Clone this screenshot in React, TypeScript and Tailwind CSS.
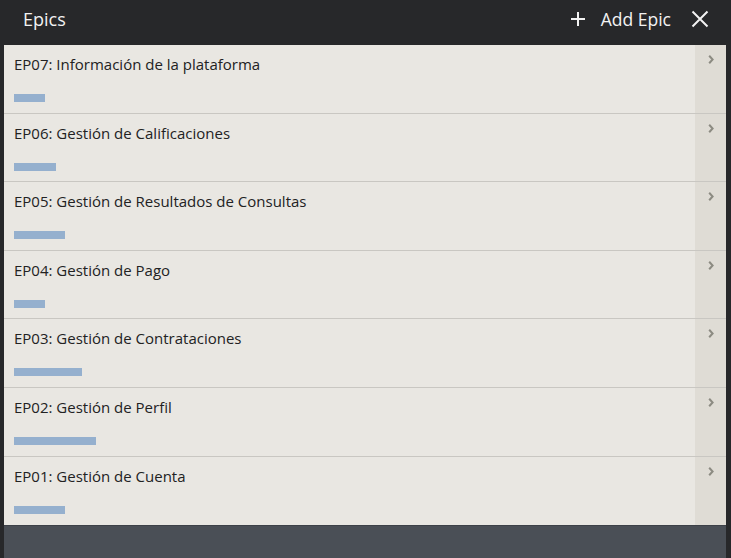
import React from 'react'

const epics = [
    { code: 'EP07', name: 'Información de la plataforma', bar: 31 },
    { code: 'EP06', name: 'Gestión de Calificaciones', bar: 42 },
    { code: 'EP05', name: 'Gestión de Resultados de Consultas', bar: 51 },
    { code: 'EP04', name: 'Gestión de Pago', bar: 31 },
    { code: 'EP03', name: 'Gestión de Contrataciones', bar: 68 },
    { code: 'EP02', name: 'Gestión de Perfil', bar: 82 },
    { code: 'EP01', name: 'Gestión de Cuenta', bar: 51 },
]

const EpicRow: React.FC<{ code: string; name: string; bar: number; last: boolean }> = ({ code, name, bar, last }) => {
    return (
        <div className={`flex h-[68.6px] ${last ? '' : 'border-b border-[#c9c7c2]'}`}>
            <div className='flex-1 pl-[10px] pt-[8px] bg-[#e9e7e2]'>
                <div className='text-[15px] leading-[22px] text-[#222]'>
                    {code}: {name}
                </div>
                <div className='mt-[19px] h-[8px] bg-[#95b0ce]' style={{ width: bar }} />
            </div>
            <div className='w-[31px] bg-[#dfdcd5] flex justify-center pt-[10px]'>
                <svg width='6' height='9' viewBox='0 0 6 9' className='ml-[1px]'>
                    <path d='M1.2 0.8L4.6 4.5L1.2 8.2' stroke='#8c8b82' strokeWidth='2' fill='none' />
                </svg>
            </div>
        </div>
    )
}

export default function App() {
    return (
        <div className="w-[731px] h-[558px] bg-[#27282a] flex flex-col font-['Open_Sans',sans-serif]">
            <div className='h-[45px] flex items-center pb-[7px] pl-[23px] pr-[22px] text-[#f2f2f2]'>
                <span className='text-[18px] flex-1'>Epics</span>
                <svg width='16' height='16' viewBox='0 0 16 16' className='mr-[15px]'>
                    <path d='M8 1V15M1 8H15' stroke='#f2f2f2' strokeWidth='2' />
                </svg>
                <span className='text-[17.5px] mr-[20px]'>Add Epic</span>
                <svg width='18' height='18' viewBox='0 0 18 18'>
                    <path d='M1.5 1.5L16.5 16.5M16.5 1.5L1.5 16.5' stroke='#f2f2f2' strokeWidth='2' />
                </svg>
            </div>
            <div className='ml-[4px] mr-[5px] flex flex-col'>
                {epics.map((e, i) => (
                    <EpicRow key={e.code} {...e} last={i === epics.length - 1} />
                ))}
            </div>
            <div className='flex-1 ml-[4px] mr-[5px] bg-[#4a4f56] border-t border-[#3d4148]' />
        </div>
    )
}
